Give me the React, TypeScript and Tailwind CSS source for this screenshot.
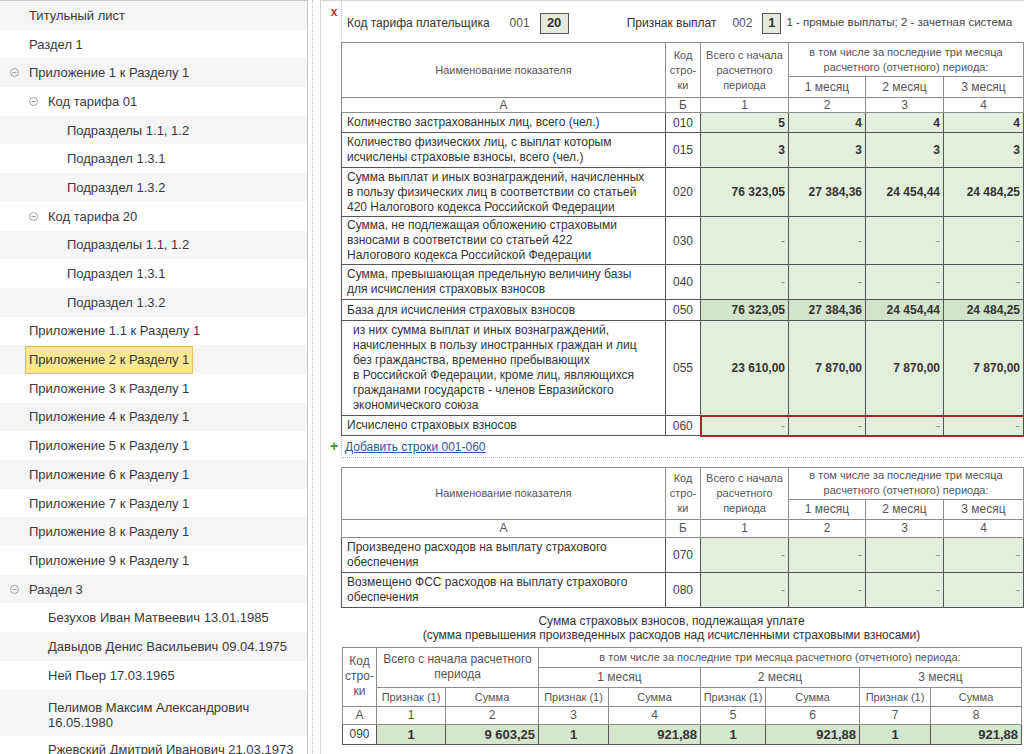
import React from 'react';

const FONT = "font-['Liberation_Sans',Arial,sans-serif]";

type NavItem = { lines: string[]; level: number; toggle?: boolean; selected?: boolean };

const nav: NavItem[] = [
  { lines: ["Титульный лист"], level: 0 },
  { lines: ["Раздел 1"], level: 0 },
  { lines: ["Приложение 1 к Разделу 1"], level: 0, toggle: true },
  { lines: ["Код тарифа 01"], level: 1, toggle: true },
  { lines: ["Подразделы 1.1, 1.2"], level: 2 },
  { lines: ["Подраздел 1.3.1"], level: 2 },
  { lines: ["Подраздел 1.3.2"], level: 2 },
  { lines: ["Код тарифа 20"], level: 1, toggle: true },
  { lines: ["Подразделы 1.1, 1.2"], level: 2 },
  { lines: ["Подраздел 1.3.1"], level: 2 },
  { lines: ["Подраздел 1.3.2"], level: 2 },
  { lines: ["Приложение 1.1 к Разделу 1"], level: 0 },
  { lines: ["Приложение 2 к Разделу 1"], level: 0, selected: true },
  { lines: ["Приложение 3 к Разделу 1"], level: 0 },
  { lines: ["Приложение 4 к Разделу 1"], level: 0 },
  { lines: ["Приложение 5 к Разделу 1"], level: 0 },
  { lines: ["Приложение 6 к Разделу 1"], level: 0 },
  { lines: ["Приложение 7 к Разделу 1"], level: 0 },
  { lines: ["Приложение 8 к Разделу 1"], level: 0 },
  { lines: ["Приложение 9 к Разделу 1"], level: 0 },
  { lines: ["Раздел 3"], level: 0, toggle: true },
  { lines: ["Безухов Иван Матвеевич 13.01.1985"], level: 1 },
  { lines: ["Давыдов Денис Васильевич 09.04.1975"], level: 1 },
  { lines: ["Ней Пьер 17.03.1965"], level: 1 },
  { lines: ["Пелимов Максим Александрович", "16.05.1980"], level: 1 },
  { lines: ["Ржевский Дмитрий Иванович 21.03.1973"], level: 1 },
];

const pad = ["pl-[10px]", "pl-[29px]", "pl-[48px]"];

const Collapse = () => (
  <svg width="9" height="9" viewBox="0 0 9 9">
    <circle cx="4.5" cy="4.5" r="4" fill="none" stroke="#a0a0a0" strokeWidth="1" />
    <line x1="2.3" y1="4.5" x2="6.7" y2="4.5" stroke="#a0a0a0" strokeWidth="1" />
  </svg>
);

const Sidebar = () => (
  <div className="w-[308px] shrink-0 border-r border-t border-[#c8c8c8] h-full overflow-hidden">
    {nav.map((it, i) => (
      <div
        key={i}
        className={`flex items-center ${i % 2 === 0 ? 'bg-[#f5f5f5]' : 'bg-white'} ${
          it.lines.length > 1 ? 'h-[46px] pt-[4px]' : 'h-[28.7px]'
        } ${pad[it.level]}`}
      >
        <div className="w-[19px] shrink-0 flex items-center">{it.toggle && <Collapse />}</div>
        {it.selected ? (
          <span className="h-[28px] -ml-[4px] px-[3px] flex items-center bg-[#fbe692] border border-[#e3c157] text-[13px] text-[#333]">
            {it.lines[0]}
          </span>
        ) : (
          <span className="text-[13px] leading-[15px] text-[#3a3a3a]">
            {it.lines.map((l, j) => (
              <div key={j}>{l}</div>
            ))}
          </span>
        )}
      </div>
    ))}
  </div>
);

// --- table cell styles ---
const th = "border border-[#8c8c8c] text-[11px] leading-[14px] text-[#555] text-center font-normal align-middle p-0";
const td = "border border-[#555] p-0 align-middle";
const nameCell = `${td} text-left text-[12px] leading-[15px] text-[#333] px-[5px]`;
const codeCell = `${td} text-center text-[12px] text-[#444]`;

const Val = ({ v, bg }: { v: string; bg: string }) =>
  v === '-' ? (
    <td className={`${td} ${bg} text-right pr-[3px] text-[12px] text-[#888]`}>-</td>
  ) : (
    <td className={`${td} ${bg} text-right pr-[3px] text-[12px] font-bold text-[#333]`}>{v}</td>
  );

const LIGHT = 'bg-[#e3eedb]';
const DARK = 'bg-[#cfe4c8]';

type Row = { code: string; name: string[]; vals: string[]; h: string; dark?: boolean; indent?: boolean; error?: boolean };

const rows1: Row[] = [
  { code: '010', name: ['Количество застрахованных лиц, всего (чел.)'], vals: ['5', '4', '4', '4'], h: 'h-[20px]' },
  { code: '015', name: ['Количество физических лиц, с выплат которым', 'исчислены страховые взносы, всего (чел.)'], vals: ['3', '3', '3', '3'], h: 'h-[35px]' },
  {
    code: '020',
    name: ['Сумма выплат и иных вознаграждений, начисленных', 'в пользу физических лиц в соответствии со статьей', '420 Налогового кодекса Российской Федерации'],
    vals: ['76 323,05', '27 384,36', '24 454,44', '24 484,25'],
    h: 'h-[49px]',
  },
  {
    code: '030',
    name: ['Сумма, не подлежащая обложению страховыми', 'взносами в соответствии со статьей 422', 'Налогового кодекса Российской Федерации'],
    vals: ['-', '-', '-', '-'],
    h: 'h-[48px]',
  },
  { code: '040', name: ['Сумма, превышающая предельную величину базы', 'для исчисления страховых взносов'], vals: ['-', '-', '-', '-'], h: 'h-[35px]' },
  { code: '050', name: ['База для исчисления страховых взносов'], vals: ['76 323,05', '27 384,36', '24 454,44', '24 484,25'], h: 'h-[21px]', dark: true },
  {
    code: '055',
    name: [
      'из них сумма выплат и иных вознаграждений,',
      'начисленных в пользу иностранных граждан и лиц',
      'без гражданства, временно пребывающих',
      'в Российской Федерации, кроме лиц, являющихся',
      'гражданами государств - членов Евразийского',
      'экономического союза',
    ],
    vals: ['23 610,00', '7 870,00', '7 870,00', '7 870,00'],
    h: 'h-[95px]',
    indent: true,
  },
  { code: '060', name: ['Исчислено страховых взносов'], vals: ['-', '-', '-', '-'], h: 'h-[20px]', error: true },
];

const rows2: Row[] = [
  { code: '070', name: ['Произведено расходов на выплату страхового', 'обеспечения'], vals: ['-', '-', '-', '-'], h: 'h-[35px]' },
  { code: '080', name: ['Возмещено ФСС расходов на выплату страхового', 'обеспечения'], vals: ['-', '-', '-', '-'], h: 'h-[35px]' },
];

const Cols = () => (
  <colgroup>
    <col className="w-[324px]" />
    <col className="w-[35px]" />
    <col className="w-[88px]" />
    <col className="w-[77px]" />
    <col className="w-[78px]" />
    <col className="w-[80px]" />
  </colgroup>
);

const Head = ({ h1, h2, h3 }: { h1: string; h2: string; h3: string }) => (
  <thead>
    <tr className={h1}>
      <th rowSpan={2} className={th}>Наименование показателя</th>
      <th rowSpan={2} className={`${th} leading-[15px]`}>
        Код<br />стро-<br />ки
      </th>
      <th rowSpan={2} className={`${th} leading-[15px]`}>
        Всего с начала<br />расчетного<br />периода
      </th>
      <th colSpan={3} className={`${th} leading-[15px]`}>
        в том числе за последние три месяца<br />расчетного (отчетного) периода:
      </th>
    </tr>
    <tr className={h2}>
      <th className={`${th} text-[12px]`}>1 месяц</th>
      <th className={`${th} text-[12px]`}>2 месяц</th>
      <th className={`${th} text-[12px]`}>3 месяц</th>
    </tr>
    <tr className={h3}>
      {['А', 'Б', '1', '2', '3', '4'].map((c) => (
        <th key={c} className={`${th} text-[12px] leading-[14px]`}>{c}</th>
      ))}
    </tr>
  </thead>
);

const Body = ({ rows }: { rows: Row[] }) => (
  <tbody>
    {rows.map((r) => (
      <tr key={r.code} className={r.h}>
        <td className={`${nameCell} ${r.indent ? 'pl-[11px]' : ''}`}>
          {r.name.map((n, j) => (
            <div key={j}>{n}</div>
          ))}
        </td>
        <td className={codeCell}>{r.code}</td>
        {r.vals.map((v, j) => {
          if (r.error) {
            const edge = j === 0 ? 'border-l-2 border-l-[#a82828]' : j === 3 ? 'border-r-2 border-r-[#a82828]' : '';
            return (
              <td
                key={j}
                className={`border border-[#555] border-y-2 border-y-[#a82828] ${edge} ${LIGHT} text-right pr-[3px] text-[12px] text-[#888] p-0`}
              >
                {v}
              </td>
            );
          }
          return <Val key={j} v={v} bg={r.dark ? DARK : LIGHT} />;
        })}
      </tr>
    ))}
  </tbody>
);

const pay = ['1', '9 603,25', '1', '921,88', '1', '921,88', '1', '921,88'];

const PayTable = () => (
  <table className="table-fixed border-collapse ml-px w-[679px] border border-[#555]">
    <colgroup>
      {['w-[34px]', 'w-[69px]', 'w-[93px]', 'w-[70px]', 'w-[92px]', 'w-[65px]', 'w-[94px]', 'w-[71px]', 'w-[91px]'].map((w, i) => (
        <col key={i} className={w} />
      ))}
    </colgroup>
    <thead>
      <tr className="h-[20px]">
        <th rowSpan={3} className={`${th} text-[12px] leading-[15px]`}>
          Код<br />стро-<br />ки
        </th>
        <th rowSpan={2} colSpan={2} className={`${th} text-[12px] leading-[15px]`}>
          Всего с начала расчетного<br />периода
        </th>
        <th colSpan={6} className={th}>в том числе за последние три месяца расчетного (отчетного) периода:</th>
      </tr>
      <tr className="h-[20px]">
        <th colSpan={2} className={`${th} text-[12px]`}>1 месяц</th>
        <th colSpan={2} className={`${th} text-[12px]`}>2 месяц</th>
        <th colSpan={2} className={`${th} text-[12px]`}>3 месяц</th>
      </tr>
      <tr className="h-[19px]">
        {[0, 1, 2, 3].map((i) => (
          <React.Fragment key={i}>
            <th className={th}>Признак (1)</th>
            <th className={th}>Сумма</th>
          </React.Fragment>
        ))}
      </tr>
      <tr className="h-[18px]">
        {['А', '1', '2', '3', '4', '5', '6', '7', '8'].map((c) => (
          <th key={c} className={`${th} text-[12px]`}>{c}</th>
        ))}
      </tr>
    </thead>
    <tbody>
      <tr className="h-[19px]">
        <td className={codeCell}>090</td>
        {pay.map((v, i) => (
          <td
            key={i}
            className={`${td} bg-[#d2e7cb] text-[13px] font-bold text-[#333] ${i % 2 === 0 ? 'text-center' : 'text-right pr-[3px]'}`}
          >
            {v}
          </td>
        ))}
      </tr>
    </tbody>
  </table>
);

const Panel = () => (
  <div className="flex-1 border-l border-t border-[#d4d4d4] bg-white pr-[2px] overflow-hidden">
    <div className="flex">
      {/* gutter with markers */}
      <div className="w-[20px] shrink-0 flex flex-col justify-between items-center pt-[5px] pb-[5px] pl-[6px]">
        <span className="text-[#c03030] font-bold text-[12px] leading-[12px]">x</span>
        <span className="text-[#3a9a2a] font-bold text-[14px] leading-[14px]">+</span>
      </div>
      <div className="flex-1 border-l border-b border-r border-dotted border-[#b8b8b8] pt-[11px]">
        <div className="flex items-center h-[22px] pl-[5px] text-[12px] text-[#333] whitespace-nowrap">
          <span>Код тарифа плательщика</span>
          <span className="ml-[20px] text-[#555]">001</span>
          <span className="ml-[10px] w-[29px] h-[21px] flex items-center justify-center border border-[#555] bg-[#e4eadc] font-bold text-[13px]">20</span>
          <span className="ml-[58px]">Признак выплат</span>
          <span className="ml-[16px] text-[#555]">002</span>
          <span className="ml-[10px] w-[19px] h-[21px] flex items-center justify-center border border-[#555] bg-[#e4eadc] font-bold text-[13px]">1</span>
          <span className="ml-[5px] text-[11.5px] text-[#444]">1 - прямые выплаты; 2 - зачетная система</span>
        </div>
        <table className="table-fixed border-collapse w-full mt-[8px] -ml-px border border-[#555]">
          <Cols />
          <Head h1="h-[34px]" h2="h-[21px]" h3="h-[15px]" />
          <Body rows={rows1} />
        </table>
        <div className="h-[20px] flex items-center pl-[3px]">
          <span className="text-[12px] text-[#2a55a0] underline">Добавить строки 001-060</span>
        </div>
      </div>
    </div>
    <div className="pl-[20px] mt-[9px]">
      <table className="table-fixed border-collapse w-[682px] border border-[#555]">
        <Cols />
        <Head h1="h-[32px]" h2="h-[20px]" h3="h-[18px]" />
        <Body rows={rows2} />
      </table>
      <div className="mt-[6px] -ml-[20px] text-center text-[12px] leading-[14px] text-[#333]">
        <div>Сумма страховых взносов, подлежащая уплате</div>
        <div>(сумма превышения произведенных расходов над исчисленными страховыми взносами)</div>
      </div>
      <div className="mt-[5px]">
        <PayTable />
      </div>
    </div>
  </div>
);

export default function App() {
  return (
    <div className={`${FONT} w-[1024px] h-[754px] overflow-hidden bg-white flex`}>
      <Sidebar />
      <div className="w-[4px] shrink-0" />
      <div className="w-[8px] shrink-0 border-l border-dotted border-[#bcbcbc]" />
      <Panel />
    </div>
  );
}
